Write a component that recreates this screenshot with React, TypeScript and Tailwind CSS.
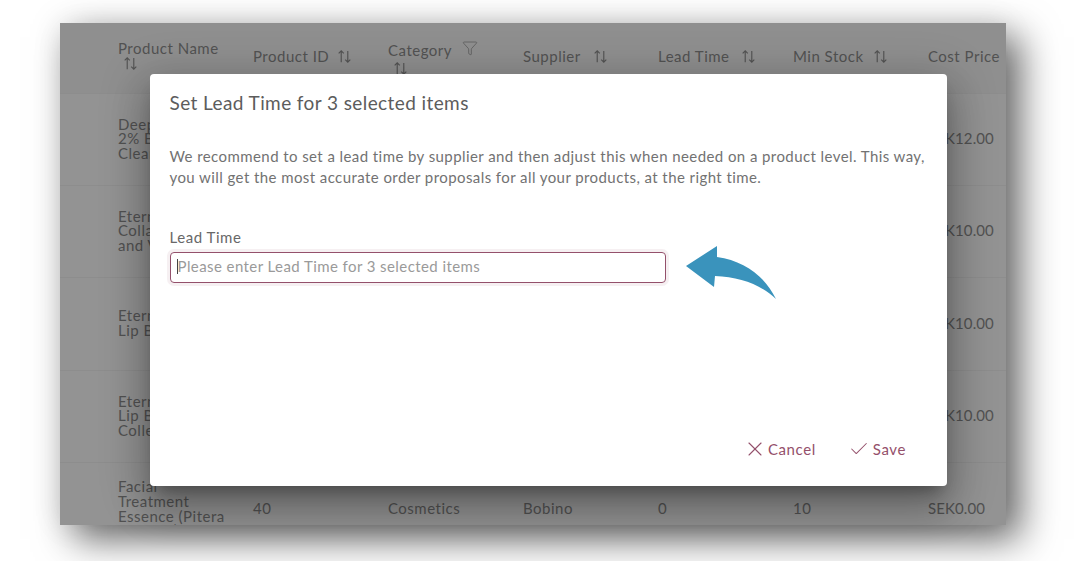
import { Check, Filter, X } from "lucide-react";

const rows = [
  { name: ["Deep Pore", "2% BHA", "Cleanser"], id: "37", cost: "SEK12.00", h: "h-[92px] pb-[2px]" },
  { name: ["Eternal", "Collagen", "and Vitamin"], id: "38", cost: "SEK10.00", h: "h-[92px] pb-[2px]" },
  { name: ["Eternal", "Lip Balm"], id: "39", cost: "SEK10.00", h: "h-[93px] pb-[2px]" },
  { name: ["Eternal", "Lip Balm", "Collection"], id: "41", cost: "SEK10.00", h: "h-[92px] pb-[2px]" },
  { name: ["Facial", "Treatment", "Essence (Pitera", "Essence)"], id: "40", cost: "SEK0.00", h: "h-[92px]" },
];

function SortIcon({ className = "" }: { className?: string }) {
  return (
    <svg viewBox="0 0 16 16" className={`w-[15px] h-[15px] shrink-0 ${className}`} fill="none" stroke="currentColor" strokeWidth="1.2">
      <path d="M4.5 14V2M1.8 4.7 4.5 2l2.7 2.7" />
      <path d="M11.5 2v12M8.8 11.3l2.7 2.7 2.7-2.7" />
    </svg>
  );
}

function HeaderCell({ label, gap }: { label: string; gap: string }) {
  return (
    <div className={`flex items-center -mt-[3px] ${gap}`}>
      <span>{label}</span>
      <SortIcon />
    </div>
  );
}

function DataTable() {
  return (
    <div className="text-[15px] leading-[14.6px] tracking-[0.5px] text-[#525252]">
      <div className="grid grid-cols-[repeat(7,135px)] pl-[58px] h-[70px] items-center bg-[#8f8f8f]">
        <div className="pb-[5px]">
          <div className="leading-[16px]">Product Name</div>
          <SortIcon className="ml-[5px]" />
        </div>
        <HeaderCell label="Product ID" gap="gap-[8px]" />
        <div className="mt-[3px]">
          <div className="flex items-center gap-[10px]">
            <span>Category</span>
            <Filter size={16} strokeWidth={1} className="-mt-[4px]" />
          </div>
          <SortIcon className="ml-[5px] mt-[4px]" />
        </div>
        <HeaderCell label="Supplier" gap="gap-[12px]" />
        <HeaderCell label="Lead Time" gap="gap-[11px]" />
        <HeaderCell label="Min Stock" gap="gap-[9px]" />
        <div className="-mt-[3px]">Cost Price</div>
      </div>
      {rows.map((row) => (
        <div key={row.id} className={`grid grid-cols-[repeat(7,135px)] pl-[58px] items-center border-t border-[#8d8d8d] ${row.h}`}>
          <div>
            {row.name.map((line) => (
              <div key={line}>{line}</div>
            ))}
          </div>
          <div>{row.id}</div>
          <div>Cosmetics</div>
          <div>Bobino</div>
          <div>0</div>
          <div>10</div>
          <div className="tracking-[0.1px]">{row.cost}</div>
        </div>
      ))}
    </div>
  );
}

function LeadTimeDialog() {
  return (
    <div className="absolute left-[89.5px] top-[51px] w-[797.5px] h-[412px] flex flex-col rounded-[4px] bg-white px-[20px] pt-[18px] pb-[25px] shadow-[0_11px_15px_-7px_rgba(0,0,0,0.3),0_24px_38px_3px_rgba(0,0,0,0.2),0_9px_46px_8px_rgba(0,0,0,0.18)]">
      <h2 className="text-[19px] leading-[21px] tracking-[0.41px] font-normal text-[#5c5c5c]">Set Lead Time for 3 selected items</h2>
      <p className="mt-[33px] text-[15px] leading-[21px] tracking-[0.42px] text-[#727272]">
        We recommend to set a lead time by supplier and then adjust this when needed on a product level. This way,
        <br />
        you will get the most accurate order proposals for all your products, at the right time.
      </p>
      <label className="mt-[40px] text-[15px] leading-[18px] tracking-[0.55px] text-[#686868]">Lead Time</label>
      <div className="mt-[6px] flex items-start gap-[20px]">
        <div className="w-[496px] h-[31px] flex items-center rounded-[4px] border border-[#94506b] pl-[6px] pb-[2px] shadow-[0_0_0_3px_rgba(142,58,89,0.08)]">
          <span className="w-px h-[15px] bg-[#444444]" />
          <span className="text-[15px] tracking-[0.42px] text-[#9a9a9a]">Please enter Lead Time for 3 selected items</span>
        </div>
        <svg viewBox="0 0 91 54" className="w-[91px] h-[54px] -mt-[6px] shrink-0">
          <path d="M0 20 31 0 31 11C58 15 78 29 90 53 74 38 54 31 29 30L28 41Z" fill="#3a93bc" />
        </svg>
      </div>
      <div className="mt-auto flex justify-end gap-[32px] pr-[21px] text-[15px] tracking-[0.6px] text-[#94506b]">
        <button className="flex items-center gap-[1px]">
          <X size={24} strokeWidth={1.1} />
          Cancel
        </button>
        <button className="flex items-center gap-[3px]">
          <Check size={22} strokeWidth={1.1} />
          Save
        </button>
      </div>
    </div>
  );
}

export default function App() {
  return (
    <div className="w-[1088px] h-[561px] overflow-hidden bg-white pl-[60px] pt-[23px] font-['Lato',sans-serif]">
      <div className="relative w-[946px] h-[502px] bg-[#939393] shadow-[14px_14px_36px_rgba(0,0,0,0.6),0_0_30px_rgba(0,0,0,0.08)]">
        <div className="h-full overflow-hidden">
          <DataTable />
        </div>
        <LeadTimeDialog />
      </div>
    </div>
  );
}
